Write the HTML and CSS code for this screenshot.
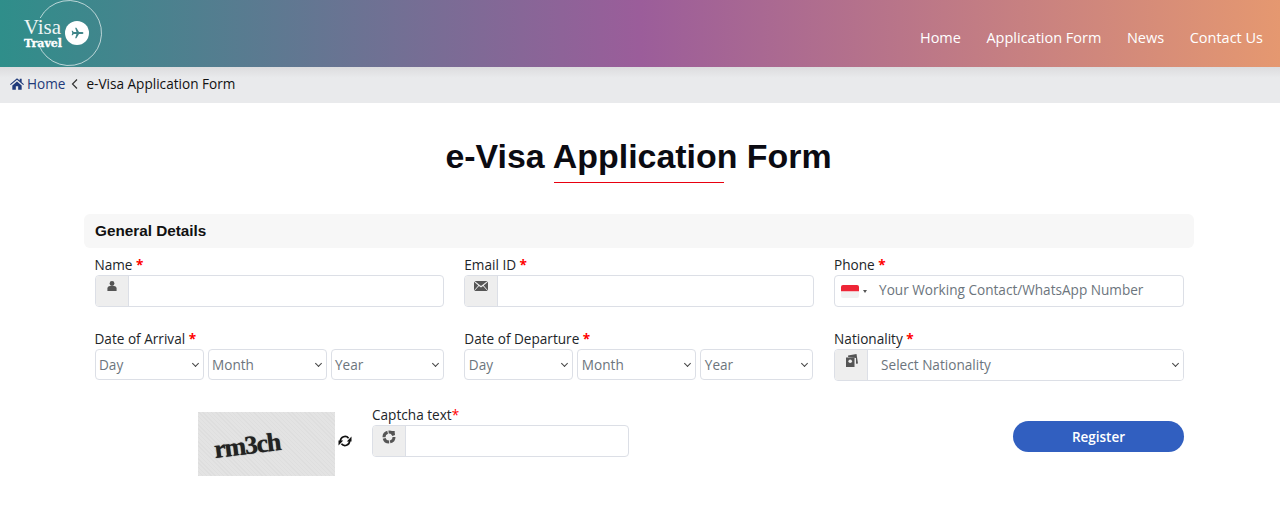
FILE: index.html
```html
<!DOCTYPE html>
<html>

<head>
    <meta charset="utf-8">
    <title>e-Visa Application Form</title>
    <link rel="stylesheet" href="styles.css">
</head>

<body>
    <div class="navbar">
        <div class="logo">
            <svg class="logo-ring" viewBox="0 0 102 67" width="102" height="67">
                <path fill="none" stroke="#fff" stroke-opacity="0.65" d="M40.200 18A32.500 32.500 0 1 1 38.800 45"/>
            </svg>
            <div class="logo-text">
                <span class="logo-visa">Visa</span>
                <span class="logo-travel">Travel</span>
            </div>
            <span class="logo-badge">
                <svg viewBox="0 0 24 24" width="14" height="14">
                    <path fill="#3f8588" d="M23 12c0-1-1.200-1.700-2.600-1.700h-5L11 3H8.800l2.300 7.300H6.400L4.500 8H2.800l1.100 4-1.100 4h1.700l1.900-2.300h4.700L8.800 21H11l4.400-7.300h5c1.400 0 2.600-.7 2.600-1.700z"/>
                </svg>
            </span>
        </div>
        <ul class="nav-links">
            <li>Home</li>
            <li>Application Form</li>
            <li>News</li>
            <li>Contact Us</li>
        </ul>
    </div>

    <div class="breadcrumb">
        <svg class="home-icon" viewBox="0 0 24 20" width="14" height="12">
            <path fill="#1f3a7a" d="M12 0 0 10.300l1.300 1.500L12 2.600l10.700 9.200 1.300-1.500-4-3.500V1h-3.300v3L12 0zM4 12.500V20h6v-6h4v6h6v-7.500L12 5.600 4 12.500z"/>
        </svg>
        <span class="crumb-link">Home</span>
        <svg class="crumb-sep" viewBox="0 0 8 12" width="8" height="12">
            <path fill="none" stroke="#333" stroke-width="1.200" d="M6 1.500 1.500 6 6 10.500"/>
        </svg>
        <span class="crumb-current">e-Visa Application Form</span>
    </div>

    <h1 class="page-title">e-Visa Application Form</h1>

    <div class="container">
        <h2 class="section-head">General Details</h2>

        <div class="form-grid">
            <div class="field">
                <label>Name <span class="req">*</span></label>
                <div class="input-group">
                    <span class="addon">
                        <svg viewBox="0 0 12 12" width="10" height="10">
                            <circle cx="6" cy="3" r="2.900" fill="#555"/>
                            <path fill="#555" d="M.5 12V9c0-1.700 1.300-3 3-3h5c1.700 0 3 1.300 3 3v3z"/>
                        </svg>
                    </span>
                    <span class="input"></span>
                </div>
            </div>
            <div class="field">
                <label>Email ID <span class="req">*</span></label>
                <div class="input-group">
                    <span class="addon">
                        <svg viewBox="0 0 14 10" width="14" height="10">
                            <path fill="#555" d="M.5 0h13L7 5z"/>
                            <path fill="#555" d="M0 .8v8.700l4.300-5zM14 .8v8.700L9.700 4.500zM5 5 .4 10h13.200L9 5 7 6.500z"/>
                        </svg>
                    </span>
                    <span class="input"></span>
                </div>
            </div>
            <div class="field">
                <label>Phone <span class="req">*</span></label>
                <div class="input-group">
                    <span class="phone-flag">
                        <svg class="flag" viewBox="0 0 18 13" width="18" height="13">
                            <rect width="18" height="6.500" fill="#ee2536"/>
                            <rect y="6.500" width="18" height="6.500" fill="#f1f1f1"/>
                        </svg>
                        <i class="caret"></i>
                    </span>
                    <span class="input placeholder">Your Working Contact/WhatsApp Number</span>
                </div>
            </div>

            <div class="field">
                <label>Date of Arrival <span class="req">*</span></label>
                <div class="date-row">
                    <span class="select">Day</span>
                    <span class="select">Month</span>
                    <span class="select">Year</span>
                </div>
            </div>
            <div class="field">
                <label>Date of Departure <span class="req">*</span></label>
                <div class="date-row">
                    <span class="select">Day</span>
                    <span class="select">Month</span>
                    <span class="select">Year</span>
                </div>
            </div>
            <div class="field">
                <label>Nationality <span class="req">*</span></label>
                <div class="input-group">
                    <span class="addon addon-small">
                        <svg viewBox="0 0 13 13" width="13" height="13">
                            <path fill="#555" d="M3 1.500 11.500 0l1.500 9.500-2 .3V4L3.200 3z"/>
                            <path fill="#555" d="M1 3.500h8.500V13H1z"/>
                            <circle cx="5.200" cy="7.200" r="1.800" fill="#eee"/>
                        </svg>
                    </span>
                    <span class="select select-flat">Select Nationality</span>
                </div>
            </div>
        </div>

        <div class="captcha-row">
            <div class="captcha-img"><span>rm3ch</span></div>
            <svg class="refresh" viewBox="0 0 14 12" width="14" height="12">
                <path fill="none" stroke="#111" stroke-width="1.700" d="M2.400 6A4.600 4.600 0 0 1 10.600 3.200M11.600 6A4.600 4.600 0 0 1 3.400 8.800"/>
                <path fill="#111" d="M13.500 1.500V6.400H8.800zM.5 10.500V5.600h4.700z"/>
            </svg>
            <div class="captcha-field">
                <label>Captcha text<span class="req req-thin">*</span></label>
                <div class="input-group">
                    <span class="addon addon-small">
                        <svg viewBox="0 0 14 14" width="14" height="14">
                            <circle cx="7" cy="7" r="5" fill="none" stroke="#555" stroke-width="3" stroke-dasharray="6.500 1 6.500 1 6.500 1 6.500 3"/>
                            <rect x="9.500" y="1" width="3.200" height="3.600" fill="#555"/>
                        </svg>
                    </span>
                    <span class="input"></span>
                </div>
            </div>
            <button class="register">Register</button>
        </div>
    </div>
</body>

</html>
```

FILE: styles.css
```css
body {
    font-family: "Open Sans", sans-serif;
    margin: 0;
    color: #212529;
    background-color: #fff;
}

.navbar {
    height: 67px;
    display: flex;
    justify-content: space-between;
    align-items: center;
    background: linear-gradient(90deg, #2f8e8a 0%, #9b5d9a 50%, #e59870 100%);
}

.logo {
    position: relative;
    width: 102px;
    height: 67px;
    flex: none;
    overflow: hidden;
}

.logo-ring {
    position: absolute;
    left: 0;
    top: 0;
}

.logo-text {
    position: absolute;
    left: 20px;
    top: 15px;
    width: 42px;
    color: #fff;
    text-align: right;
}

.logo-visa {
    display: block;
    font-family: "Liberation Serif", serif;
    font-size: 21px;
    line-height: 24px;
    padding-right: 1px;
    opacity: 0.92;
}

.logo-travel {
    display: block;
    font-family: "DejaVu Serif", serif;
    font-weight: bold;
    font-size: 11px;
    line-height: 10px;
    -webkit-text-stroke: 0.3px #fff;
}

.logo-badge {
    position: absolute;
    left: 65px;
    top: 21px;
    width: 24px;
    height: 24px;
    border-radius: 50%;
    background-color: #fff;
    display: flex;
    align-items: center;
    justify-content: center;
}

.nav-links {
    list-style: none;
    display: flex;
    gap: 25.500px;
    margin: 0;
    padding: 7px 17px 0 0;
    color: #fff;
    font-size: 14.500px;
}

.breadcrumb {
    height: 36px;
    display: flex;
    align-items: center;
    padding: 0 0 3px 10px;
    box-sizing: border-box;
    font-size: 13.600px;
    background: linear-gradient(180deg, #dcdcde 0%, #e9eaec 30%, #e9eaec 100%);
}

.home-icon {
    margin-right: 3px;
}

.crumb-link {
    color: #1f3a7a;
    font-weight: 500;
}

.crumb-sep {
    margin: 0 7px 0 6px;
}

.crumb-current {
    color: #111;
}

.page-title {
    width: fit-content;
    margin: 34px auto 38px;
    padding-right: 3px;
    font-family: "Liberation Sans", sans-serif;
    font-size: 33.900px;
    line-height: 39px;
    font-weight: bold;
    color: #0b0b12;
    position: relative;
}

.page-title::after {
    content: "";
    position: absolute;
    left: 109px;
    bottom: -7px;
    width: 170px;
    height: 1px;
    background-color: #e8000f;
}

.container {
    width: 1110px;
    margin-left: 84px;
}

.section-head {
    margin: 0;
    height: 34px;
    line-height: 34px;
    padding-left: 11px;
    font-family: "Liberation Sans", sans-serif;
    font-size: 15.300px;
    font-weight: bold;
    color: #111;
    background-color: #f7f7f7;
    border-radius: 6px;
}

.form-grid {
    display: grid;
    grid-template-columns: repeat(3, 349.500px);
    column-gap: 20.300px;
    row-gap: 22px;
    padding: 7px 0 0 10.500px;
}

.field label,
.captcha-field label {
    display: block;
    font-size: 13.600px;
    line-height: 20px;
    color: #212529;
}

.req {
    color: #f00;
    font-weight: bold;
}

.req-thin {
    font-weight: normal;
}

.input-group {
    display: flex;
    height: 32px;
    box-sizing: border-box;
    border: 1px solid #dcdfe6;
    border-radius: 4px;
    background-color: #fff;
    overflow: hidden;
}

.addon {
    width: 33px;
    flex: none;
    box-sizing: border-box;
    padding-top: 5px;
    background-color: #eee;
    border-right: 1px solid #dcdfe6;
}

.addon svg {
    display: block;
    margin: 0 auto;
}

.addon-small {
    padding-top: 4px;
}

.input {
    flex: 1;
    display: block;
    font-size: 13.600px;
    line-height: 28px;
}

.placeholder {
    color: #6c757d;
    padding-left: 10px;
}

.phone-flag {
    display: flex;
    align-items: center;
    padding-left: 6px;
    width: 28px;
    flex: none;
}

.flag {
    border-radius: 2px;
}

.caret {
    margin-left: 4px;
    border-left: 2px solid transparent;
    border-right: 2px solid transparent;
    border-top: 3px solid #555;
}

.date-row {
    display: grid;
    grid-template-columns: 109px 119px 113px;
    gap: 4px;
}

.select {
    position: relative;
    display: block;
    height: 31px;
    box-sizing: border-box;
    border: 1px solid #dcdfe6;
    border-radius: 4px;
    padding-left: 3.500px;
    font-size: 13.600px;
    line-height: 29px;
    color: #6c757d;
    background-color: #fff;
}

.select::after {
    content: "";
    position: absolute;
    right: 5px;
    top: 11px;
    width: 4px;
    height: 4px;
    border-right: 1.500px solid #444;
    border-bottom: 1.500px solid #444;
    transform: rotate(45deg);
}

.select-flat {
    flex: 1;
    height: 30px;
    border: 0;
    border-radius: 0;
    padding-left: 13px;
}

.captcha-row {
    display: flex;
    align-items: flex-start;
    padding: 31px 0 0 114px;
}

.captcha-img {
    width: 137px;
    height: 64px;
    flex: none;
    box-sizing: border-box;
    padding: 19px 0 0 16px;
    background-color: #e0e0e0;
    background-image: repeating-linear-gradient(45deg, #dedede 0, #dedede 1px, #e3e3e3 1px, #e3e3e3 3px);
}

.captcha-img span {
    display: block;
    width: fit-content;
    font-family: "Liberation Serif", serif;
    font-size: 26px;
    line-height: 30px;
    font-weight: bold;
    color: #222;
    letter-spacing: -1.200px;
    text-shadow: 0 0 1px #333;
    transform: rotate(-7deg);
}

.refresh {
    flex: none;
    margin: 23px 20px 0 3px;
}

.captcha-field {
    width: 257px;
    flex: none;
    margin-top: -7px;
}

.register {
    width: 171px;
    height: 31px;
    margin: 9px 0 0 384px;
    border: none;
    border-radius: 16px;
    background-color: #315fc0;
    color: #fff;
    font-family: "Open Sans", sans-serif;
    font-size: 13.500px;
    font-weight: 600;
}
```
